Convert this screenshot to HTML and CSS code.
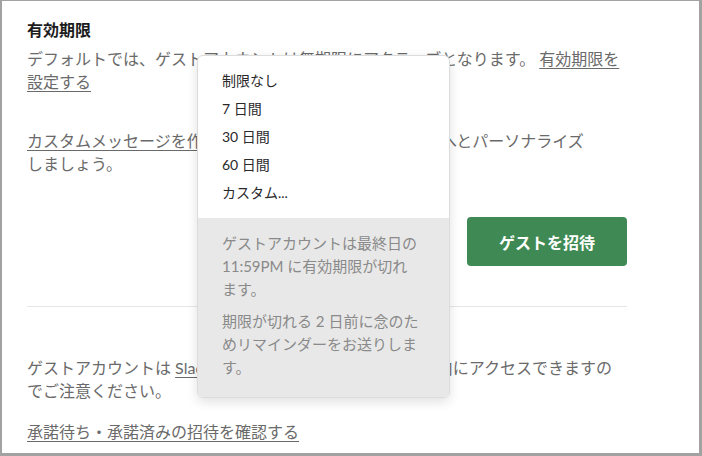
FILE: index.html
```html
<!DOCTYPE html>
<html lang="ja">
<head>
<meta charset="utf-8">
<link rel="stylesheet" href="styles.css">
</head>
<body>
<div class="frame">
  <div class="content">
    <h2 class="title">有効期限</h2>
    <p class="text">デフォルトでは、ゲストアカウントは無期限にアクティブとなります。 <a class="link" href="#">有効期限を設定する</a></p>
    <p class="text custom"><a class="link" href="#">カスタムメッセージを作成</a>して、招待をゲスト一人ひとりへとパーソナライズ<br>しましょう。</p>
    <div class="actions">
      <button class="btn-primary">ゲストを招待</button>
    </div>
    <hr class="divider">
    <p class="text note">ゲストアカウントは <a class="link" href="#">Slack ワークスペース</a>の限られた範囲内にアクセスできますの<br>でご注意ください。</p>
    <p class="text review"><a class="link" href="#">承諾待ち・承諾済みの招待を確認する</a></p>
  </div>

  <div class="menu">
    <ul class="menu-list">
      <li class="menu-item">制限なし</li>
      <li class="menu-item">7 日間</li>
      <li class="menu-item">30 日間</li>
      <li class="menu-item">60 日間</li>
      <li class="menu-item">カスタム...</li>
    </ul>
    <div class="menu-help">
      <p class="help-text">ゲストアカウントは最終日の<br>11:59PM に有効期限が切れ<br>ます。</p>
      <p class="help-text">期限が切れる 2 日前に念のた<br>めリマインダーをお送りしま<br>す。</p>
    </div>
  </div>
</div>
</body>
</html>
```

FILE: styles.css
```css
* { box-sizing: border-box; }

html, body {
  margin: 0;
  padding: 0;
  background: #ffffff;
}

body {
  font-family: Lato, "Noto Sans CJK JP", sans-serif;
  color: #6a6a6a;
}

.frame {
  position: relative;
  width: 702px;
  height: 456px;
  border-style: solid;
  border-color: #a2a2a2;
  border-width: 1px 3px 3px 2px;
  overflow: hidden;
}

.content {
  padding: 17px 72px 0 25px;
}

.title {
  margin: 0;
  font-size: 16px;
  line-height: 23px;
  font-weight: 700;
  color: #1d1c1d;
}

.text {
  margin: 0;
  font-size: 16px;
  line-height: 23px;
  color: #6a6a6a;
}

.title + .text {
  margin-top: 6px;
}

.link {
  color: #6a6a6a;
  text-decoration: underline;
  text-underline-offset: 3px;
}

.custom {
  margin-top: 36px;
}

.actions {
  display: flex;
  justify-content: flex-end;
  margin-top: 42px;
}

.btn-primary {
  width: 160px;
  height: 49px;
  border: none;
  border-radius: 4px;
  background: #3f8a54;
  color: #ffffff;
  font-family: Lato, "Noto Sans CJK JP", sans-serif;
  font-size: 16px;
  font-weight: 700;
  padding: 0;
}

.divider {
  margin: 40px 0 0;
  border: none;
  border-top: 1px solid #e6e6e6;
  height: 0;
}

.note {
  margin-top: 49px;
}

.review {
  margin-top: 18px;
}

.menu {
  position: absolute;
  left: 195px;
  top: 54px;
  width: 253px;
  background: #ffffff;
  border: 1px solid #dcdcdc;
  border-radius: 6px;
  box-shadow: 0 4px 12px rgba(0, 0, 0, 0.12);
  overflow: hidden;
}

.menu-list {
  list-style: none;
  margin: 0;
  padding: 11px 0 11px;
}

.menu-item {
  padding: 0 24px;
  font-size: 14px;
  line-height: 28px;
  height: 28px;
  color: #2a292a;
}

.menu-help {
  background: #e8e8e8;
  padding: 14px 24px 18px;
  display: flex;
  flex-direction: column;
  gap: 9px;
}

.help-text {
  margin: 0;
  font-size: 15px;
  line-height: 23px;
  color: #8a8a8a;
  white-space: nowrap;
}
```
